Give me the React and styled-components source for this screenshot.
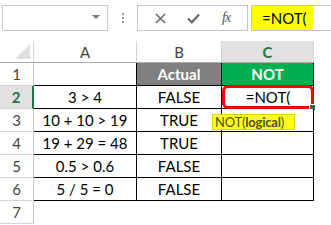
import { Fragment } from "react";
import styled, { createGlobalStyle } from "styled-components";

const GlobalStyle = createGlobalStyle`
  html, body {
    margin: 0;
    padding: 0;
    background: #ffffff;
  }
  body {
    font-family: Lato, "Open Sans", sans-serif;
    width: 331px;
    height: 225px;
    overflow: hidden;
  }
`;

const Sheet = styled.div`
  position: relative;
  width: 331px;
  height: 225px;
  overflow: hidden;
  background: #fff;
`;

const FormulaBar = styled.div`
  display: flex;
  align-items: flex-start;
  height: 41px;
  padding: 5px 0 0 2px;
  box-sizing: border-box;
`;

const NameBox = styled.div`
  width: 106px;
  height: 26px;
  box-sizing: border-box;
  border: 1px solid #c6c6c6;
  display: flex;
  align-items: center;
  justify-content: flex-end;
  padding-right: 7px;
`;

const Caret = styled.span`
  width: 0;
  height: 0;
  border-left: 4px solid transparent;
  border-right: 4px solid transparent;
  border-top: 4px solid #777;
  margin-top: -2px;
`;

const Grip = styled.div`
  width: 29px;
  height: 26px;
  display: flex;
  flex-direction: column;
  align-items: center;
  justify-content: center;
  gap: 2px;

  span {
    width: 2px;
    height: 2px;
    background: #9a9a9a;
  }
`;

const Buttons = styled.div`
  width: 111px;
  height: 26px;
  box-sizing: border-box;
  border: 1px solid #c6c6c6;
  display: flex;
  align-items: center;
  justify-content: space-around;
  padding: 0 6px;
`;

const Fx = styled.span`
  font-family: "Liberation Serif", serif;
  font-style: italic;
  font-size: 14px;
  color: #555;
  letter-spacing: -1px;
`;

const Input = styled.div`
  flex: 1;
  margin-left: 3px;
  height: 26px;
  box-sizing: border-box;
  border: 1px solid #c6c6c6;
  border-right: none;
  display: flex;
`;

const Highlight = styled.div`
  width: 61px;
  background: #ffff00;
  font-size: 15px;
  color: #000;
  display: flex;
  align-items: center;
  padding-left: 10px;
  box-sizing: border-box;
`;

const Grid = styled.div`
  display: grid;
  grid-template-columns: 34px 103px 85px 92px 1fr;
  grid-template-rows: 22px repeat(7, 23px);
`;

const Corner = styled.div`
  position: relative;
  border-right: 1px solid #d4d4d4;
  border-bottom: 1px solid #ababab;

  &::after {
    content: "";
    position: absolute;
    right: 3px;
    bottom: 3px;
    width: 0;
    height: 0;
    border-left: 15px solid transparent;
    border-bottom: 15px solid #dfdfdf;
  }
`;

const ColHead = styled.div`
  display: flex;
  align-items: center;
  justify-content: center;
  box-sizing: border-box;
  font-size: 15px;
  color: ${(p) => (p.$active ? "#217346" : "#444")};
  font-weight: ${(p) => (p.$active ? 700 : 400)};
  background: ${(p) => (p.$active ? "#e1e1e1" : "#fff")};
  border-right: 1px solid #d4d4d4;
  border-bottom: 1px solid #ababab;
`;

const Blank = styled.div``;

const RowHead = styled.div`
  display: flex;
  align-items: center;
  justify-content: center;
  box-sizing: border-box;
  font-size: 15px;
  color: ${(p) => (p.$active ? "#217346" : "#444")};
  font-weight: ${(p) => (p.$active ? 700 : 400)};
  background: ${(p) => (p.$active ? "#e1e1e1" : "#fff")};
  border-right: ${(p) => (p.$active ? "2px solid #217346" : "1px solid #c6c6c6")};
  border-bottom: 1px solid #d4d4d4;
`;

const Cell = styled.div`
  position: relative;
  display: flex;
  align-items: center;
  justify-content: center;
  box-sizing: border-box;
  font-size: 15px;
  color: ${(p) => (p.$fill ? "#fff" : "#000")};
  font-weight: ${(p) => (p.$fill ? 700 : 400)};
  background: ${(p) => p.$fill || "#fff"};
  border-right: 1px solid #000;
  border-bottom: 1px solid #000;
  white-space: nowrap;
`;

const EditRing = styled.div`
  position: absolute;
  left: 0;
  top: -1px;
  right: -1px;
  bottom: -1px;
  border: 3px solid #ff0000;
  border-radius: 6px;
  display: flex;
  align-items: center;
  justify-content: center;
  box-sizing: border-box;
`;

const Handle = styled.div`
  position: absolute;
  right: -3px;
  bottom: -3px;
  width: 5px;
  height: 5px;
  background: #217346;
  border: 1px solid #fff;
`;

const Tip = styled.div`
  position: absolute;
  left: 212px;
  top: 114px;
  width: 83px;
  height: 16px;
  box-sizing: border-box;
  background: #ffff1a;
  border: 1px solid #d6d600;
  font-size: 13px;
  line-height: 14px;
  color: #4e4e30;
  padding-left: 2px;
  white-space: nowrap;
  letter-spacing: -0.2px;

  b {
    font-weight: 700;
  }
`;

const rows = [
  ["3 > 4", "FALSE"],
  ["10 + 10 > 19", "TRUE"],
  ["19 + 29 = 48", "TRUE"],
  ["0.5 > 0.6", "FALSE"],
  ["5 / 5 = 0", "FALSE"],
];

function XIcon() {
  return (
    <svg width="11" height="11" viewBox="0 0 11 11">
      <path d="M1 1 L10 10 M10 1 L1 10" stroke="#6a6a6a" strokeWidth="1.6" />
    </svg>
  );
}

function CheckIcon() {
  return (
    <svg width="13" height="11" viewBox="0 0 13 11">
      <path d="M1 5.5 L4.8 9.3 L12 1.5" stroke="#6a6a6a" strokeWidth="2.2" fill="none" />
    </svg>
  );
}

export default function App() {
  return (
    <Sheet>
      <GlobalStyle />
      <FormulaBar>
        <NameBox>
          <Caret />
        </NameBox>
        <Grip>
          <span />
          <span />
          <span />
        </Grip>
        <Buttons>
          <XIcon />
          <CheckIcon />
          <Fx>fx</Fx>
        </Buttons>
        <Input>
          <Highlight>=NOT(</Highlight>
        </Input>
      </FormulaBar>

      <Grid>
        <Corner />
        <ColHead>A</ColHead>
        <ColHead>B</ColHead>
        <ColHead $active>C</ColHead>
        <Blank />

        <RowHead>1</RowHead>
        <Cell />
        <Cell $fill="#808080">Actual</Cell>
        <Cell $fill="#00b050">NOT</Cell>
        <Blank />

        {rows.map(([expr, actual], i) => (
          <Fragment key={i}>
            <RowHead $active={i === 0}>{i + 2}</RowHead>
            <Cell>{expr}</Cell>
            <Cell>{actual}</Cell>
            <Cell>
              {i === 0 && (
                <>
                  <EditRing>=NOT(</EditRing>
                  <Handle />
                </>
              )}
            </Cell>
            <Blank />
          </Fragment>
        ))}

        <RowHead>7</RowHead>
      </Grid>

      <Tip>
        NOT(<b>logical</b>)
      </Tip>
    </Sheet>
  );
}
